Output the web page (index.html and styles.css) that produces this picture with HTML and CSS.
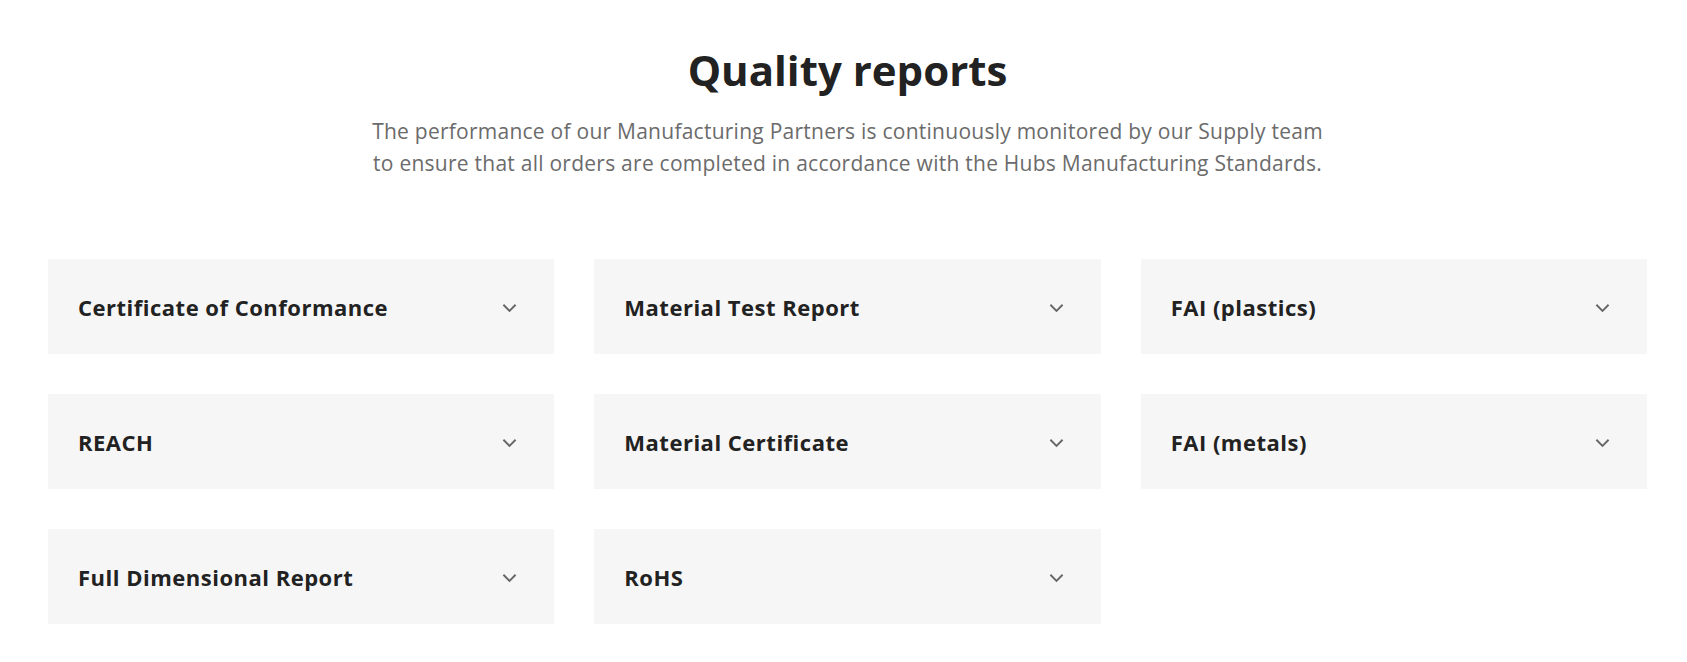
FILE: index.html
```html
<!DOCTYPE html>
<html lang="en">
<head>
    <meta charset="UTF-8">
    <meta name="viewport" content="width=device-width, initial-scale=1.0">
    <title>Quality reports</title>
    <link rel="stylesheet" href="styles.css">
</head>
<body>
    <section class="reports">
        <div class="reports-intro">
            <h2>Quality reports</h2>
            <p>The performance of our Manufacturing Partners is continuously monitored by our Supply team to ensure that all orders are completed in accordance with the Hubs Manufacturing Standards.</p>
        </div>

        <div class="reports-grid">
            <div class="report">
                <span class="report-title">Certificate of Conformance</span>
                <svg class="chevron" viewBox="0 0 16 10"><path d="M1.5 1.5 8 8l6.5-6.5"/></svg>
            </div>
            <div class="report">
                <span class="report-title">Material Test Report</span>
                <svg class="chevron" viewBox="0 0 16 10"><path d="M1.5 1.5 8 8l6.5-6.5"/></svg>
            </div>
            <div class="report">
                <span class="report-title">FAI (plastics)</span>
                <svg class="chevron" viewBox="0 0 16 10"><path d="M1.5 1.5 8 8l6.5-6.5"/></svg>
            </div>
            <div class="report">
                <span class="report-title">REACH</span>
                <svg class="chevron" viewBox="0 0 16 10"><path d="M1.5 1.5 8 8l6.5-6.5"/></svg>
            </div>
            <div class="report">
                <span class="report-title">Material Certificate</span>
                <svg class="chevron" viewBox="0 0 16 10"><path d="M1.5 1.5 8 8l6.5-6.5"/></svg>
            </div>
            <div class="report">
                <span class="report-title">FAI (metals)</span>
                <svg class="chevron" viewBox="0 0 16 10"><path d="M1.5 1.5 8 8l6.5-6.5"/></svg>
            </div>
            <div class="report">
                <span class="report-title">Full Dimensional Report</span>
                <svg class="chevron" viewBox="0 0 16 10"><path d="M1.5 1.5 8 8l6.5-6.5"/></svg>
            </div>
            <div class="report">
                <span class="report-title">RoHS</span>
                <svg class="chevron" viewBox="0 0 16 10"><path d="M1.5 1.5 8 8l6.5-6.5"/></svg>
            </div>
        </div>
    </section>
</body>
</html>
```

FILE: styles.css
```css
* {
  box-sizing: border-box;
  margin: 0;
  padding: 0;
}

body {
  font-family: 'Open Sans', sans-serif;
  background-color: #fff;
  color: #222;
}

.reports {
  padding: 44px 40px 0 48px;
}

.reports-intro {
  text-align: center;
}

.reports-intro h2 {
  font-size: 42px;
  font-weight: 700;
  line-height: 52px;
  color: #222;
}

.reports-intro p {
  max-width: 972px;
  margin: 19px auto 0;
  font-size: 21px;
  line-height: 32px;
  letter-spacing: 0.25px;
  color: #6b6b6b;
}

.reports-grid {
  display: grid;
  grid-template-columns: repeat(3, 1fr);
  gap: 40px;
  margin-top: 80px;
}

.report {
  display: flex;
  align-items: center;
  justify-content: space-between;
  height: 95px;
  padding: 0 37px 0 30px;
  background-color: #f6f6f6;
  cursor: pointer;
}

.report-title {
  font-size: 22px;
  font-weight: 700;
  letter-spacing: 0.5px;
  color: #222;
}

.chevron {
  width: 15px;
  height: 10px;
  margin-top: 2px;
  fill: none;
  stroke: #666;
  stroke-width: 2;
}
```
